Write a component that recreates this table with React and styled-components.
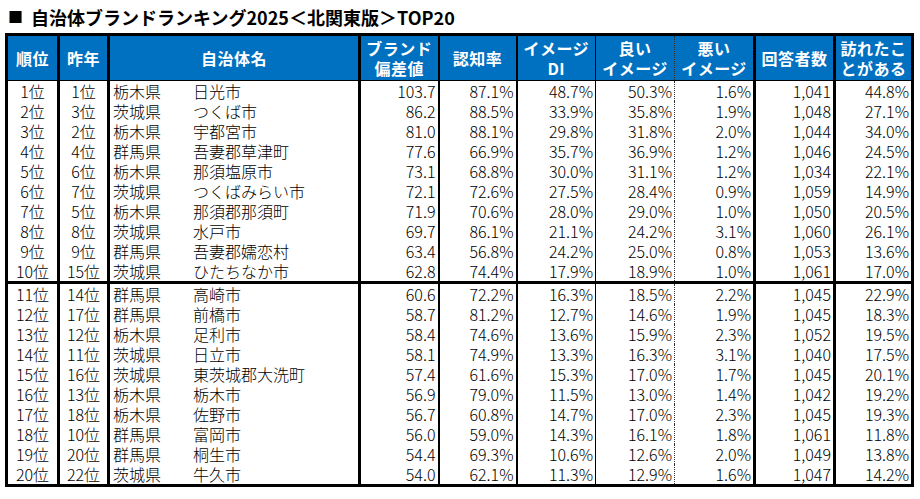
import React from 'react';
import styled, { createGlobalStyle } from 'styled-components';

const GlobalStyle = createGlobalStyle`
  html, body {
    margin: 0;
    padding: 0;
    background: #ffffff;
  }
  body {
    font-family: "Noto Sans CJK JP", sans-serif;
    color: #000000;
  }
`;

const Page = styled.div`
  width: 920px;
  height: 499px;
  padding: 0 0 0 5px;
  box-sizing: border-box;
  overflow: hidden;
`;

const Title = styled.h1`
  margin: 0;
  height: 33px;
  display: flex;
  align-items: center;
  padding-left: 3px;
  gap: 8px;
  font-family: "Noto Sans CJK JP", sans-serif;
  font-weight: 700;
  font-size: 18px;
  line-height: 22px;
  color: #000000;
`;

const Square = styled.span`
  font-size: 15px;
`;

const Table = styled.table`
  border-collapse: collapse;
  table-layout: fixed;
  width: 909px;
  border: 3px solid #000000;
`;

// vertical rule that sits on the right of each column
const RULES = {
  thick: '3px solid #000',
  mid: '2px solid #000',
  thin: '1px solid #000',
  dot: '1px dotted #333',
  none: '3px solid #000',
};

const Th = styled.th`
  background: #0070c0;
  color: #ffffff;
  font-family: "Noto Sans CJK JP", sans-serif;
  font-weight: 700;
  font-size: 16px;
  line-height: 20px;
  height: 44px;
  padding: 0;
  text-align: center;
  vertical-align: middle;
  border-right: ${(p) => RULES[p.$rule]};
  border-bottom: 1px solid #000;
  white-space: nowrap;
  letter-spacing: 0.5px;
`;

const Td = styled.td`
  height: 20px;
  padding: 0 ${(p) => (p.$align === 'right' ? '2px' : '3px')} 0 3px;
  font-family: "Liberation Sans Narrow", "Noto Sans CJK JP", sans-serif;
  font-weight: 300;
  font-size: 16px;
  line-height: 20px;
  text-align: ${(p) => p.$align || 'left'};
  vertical-align: middle;
  border-right: ${(p) => RULES[p.$rule]};
  white-space: nowrap;
`;

const Row = styled.tr`
  border-top: ${(p) => (p.$split ? '3px solid #000' : 'none')};
`;

const Name = styled.div`
  display: flex;
  font-family: "Noto Sans CJK JP", sans-serif;
  font-weight: 300;
  font-size: 16px;
  line-height: 20px;
  height: 20px;
`;

const Pref = styled.span`
  width: 80px;
  flex: none;
`;

const columns = [
  { w: 52, rule: 'thick' },
  { w: 50, rule: 'thick' },
  { w: 251, rule: 'thick' },
  { w: 79, rule: 'mid' },
  { w: 78, rule: 'mid' },
  { w: 79, rule: 'thin' },
  { w: 79, rule: 'dot' },
  { w: 80, rule: 'thick' },
  { w: 80, rule: 'thick' },
  { w: 78, rule: 'none' },
];

const headers = [
  ['順位'],
  ['昨年'],
  ['自治体名'],
  ['ブランド', '偏差値'],
  ['認知率'],
  ['イメージ', 'DI'],
  ['良い', 'イメージ'],
  ['悪い', 'イメージ'],
  ['回答者数'],
  ['訪れたこ', 'とがある'],
];

const data = [
  [1, 1, '栃木県', '日光市', '103.7', '87.1%', '48.7%', '50.3%', '1.6%', '1,041', '44.8%'],
  [2, 3, '茨城県', 'つくば市', '86.2', '88.5%', '33.9%', '35.8%', '1.9%', '1,048', '27.1%'],
  [3, 2, '栃木県', '宇都宮市', '81.0', '88.1%', '29.8%', '31.8%', '2.0%', '1,044', '34.0%'],
  [4, 4, '群馬県', '吾妻郡草津町', '77.6', '66.9%', '35.7%', '36.9%', '1.2%', '1,046', '24.5%'],
  [5, 6, '栃木県', '那須塩原市', '73.1', '68.8%', '30.0%', '31.1%', '1.2%', '1,034', '22.1%'],
  [6, 7, '茨城県', 'つくばみらい市', '72.1', '72.6%', '27.5%', '28.4%', '0.9%', '1,059', '14.9%'],
  [7, 5, '栃木県', '那須郡那須町', '71.9', '70.6%', '28.0%', '29.0%', '1.0%', '1,050', '20.5%'],
  [8, 8, '茨城県', '水戸市', '69.7', '86.1%', '21.1%', '24.2%', '3.1%', '1,060', '26.1%'],
  [9, 9, '群馬県', '吾妻郡嬬恋村', '63.4', '56.8%', '24.2%', '25.0%', '0.8%', '1,053', '13.6%'],
  [10, 15, '茨城県', 'ひたちなか市', '62.8', '74.4%', '17.9%', '18.9%', '1.0%', '1,061', '17.0%'],
  [11, 14, '群馬県', '高崎市', '60.6', '72.2%', '16.3%', '18.5%', '2.2%', '1,045', '22.9%'],
  [12, 17, '群馬県', '前橋市', '58.7', '81.2%', '12.7%', '14.6%', '1.9%', '1,045', '18.3%'],
  [13, 12, '栃木県', '足利市', '58.4', '74.6%', '13.6%', '15.9%', '2.3%', '1,052', '19.5%'],
  [14, 11, '茨城県', '日立市', '58.1', '74.9%', '13.3%', '16.3%', '3.1%', '1,040', '17.5%'],
  [15, 16, '茨城県', '東茨城郡大洗町', '57.4', '61.6%', '15.3%', '17.0%', '1.7%', '1,045', '20.1%'],
  [16, 13, '栃木県', '栃木市', '56.9', '79.0%', '11.5%', '13.0%', '1.4%', '1,042', '19.2%'],
  [17, 18, '栃木県', '佐野市', '56.7', '60.8%', '14.7%', '17.0%', '2.3%', '1,045', '19.3%'],
  [18, 10, '群馬県', '富岡市', '56.0', '59.0%', '14.3%', '16.1%', '1.8%', '1,061', '11.8%'],
  [19, 20, '群馬県', '桐生市', '54.4', '69.3%', '10.6%', '12.6%', '2.0%', '1,049', '13.8%'],
  [20, 22, '茨城県', '牛久市', '54.0', '62.1%', '11.3%', '12.9%', '1.6%', '1,047', '14.2%'],
];

const App = () => (
  <>
    <GlobalStyle />
    <Page>
      <Title>
        <Square>■</Square>
        <span>自治体ブランドランキング2025＜北関東版＞TOP20</span>
      </Title>
      <Table>
        <colgroup>
          {columns.map((c, i) => <col key={i} style={{ width: c.w }} />)}
        </colgroup>
        <thead>
          <tr>
            {headers.map((h, i) => (
              <Th key={i} $rule={columns[i].rule}>
                {h.map((line, j) => <div key={j}>{line}</div>)}
              </Th>
            ))}
          </tr>
        </thead>
        <tbody>
          {data.map((r) => {
            const [rank, prev, pref, city, ...nums] = r;
            return (
              <Row key={rank} $split={rank === 11}>
                <Td $align="center" $rule="thick">{rank}位</Td>
                <Td $align="center" $rule="thick">{prev}位</Td>
                <Td $rule="thick">
                  <Name>
                    <Pref>{pref}</Pref>
                    <span>{city}</span>
                  </Name>
                </Td>
                {nums.map((n, i) => (
                  <Td key={i} $align="right" $rule={columns[i + 3].rule}>{n}</Td>
                ))}
              </Row>
            );
          })}
        </tbody>
      </Table>
    </Page>
  </>
);

export default App;
